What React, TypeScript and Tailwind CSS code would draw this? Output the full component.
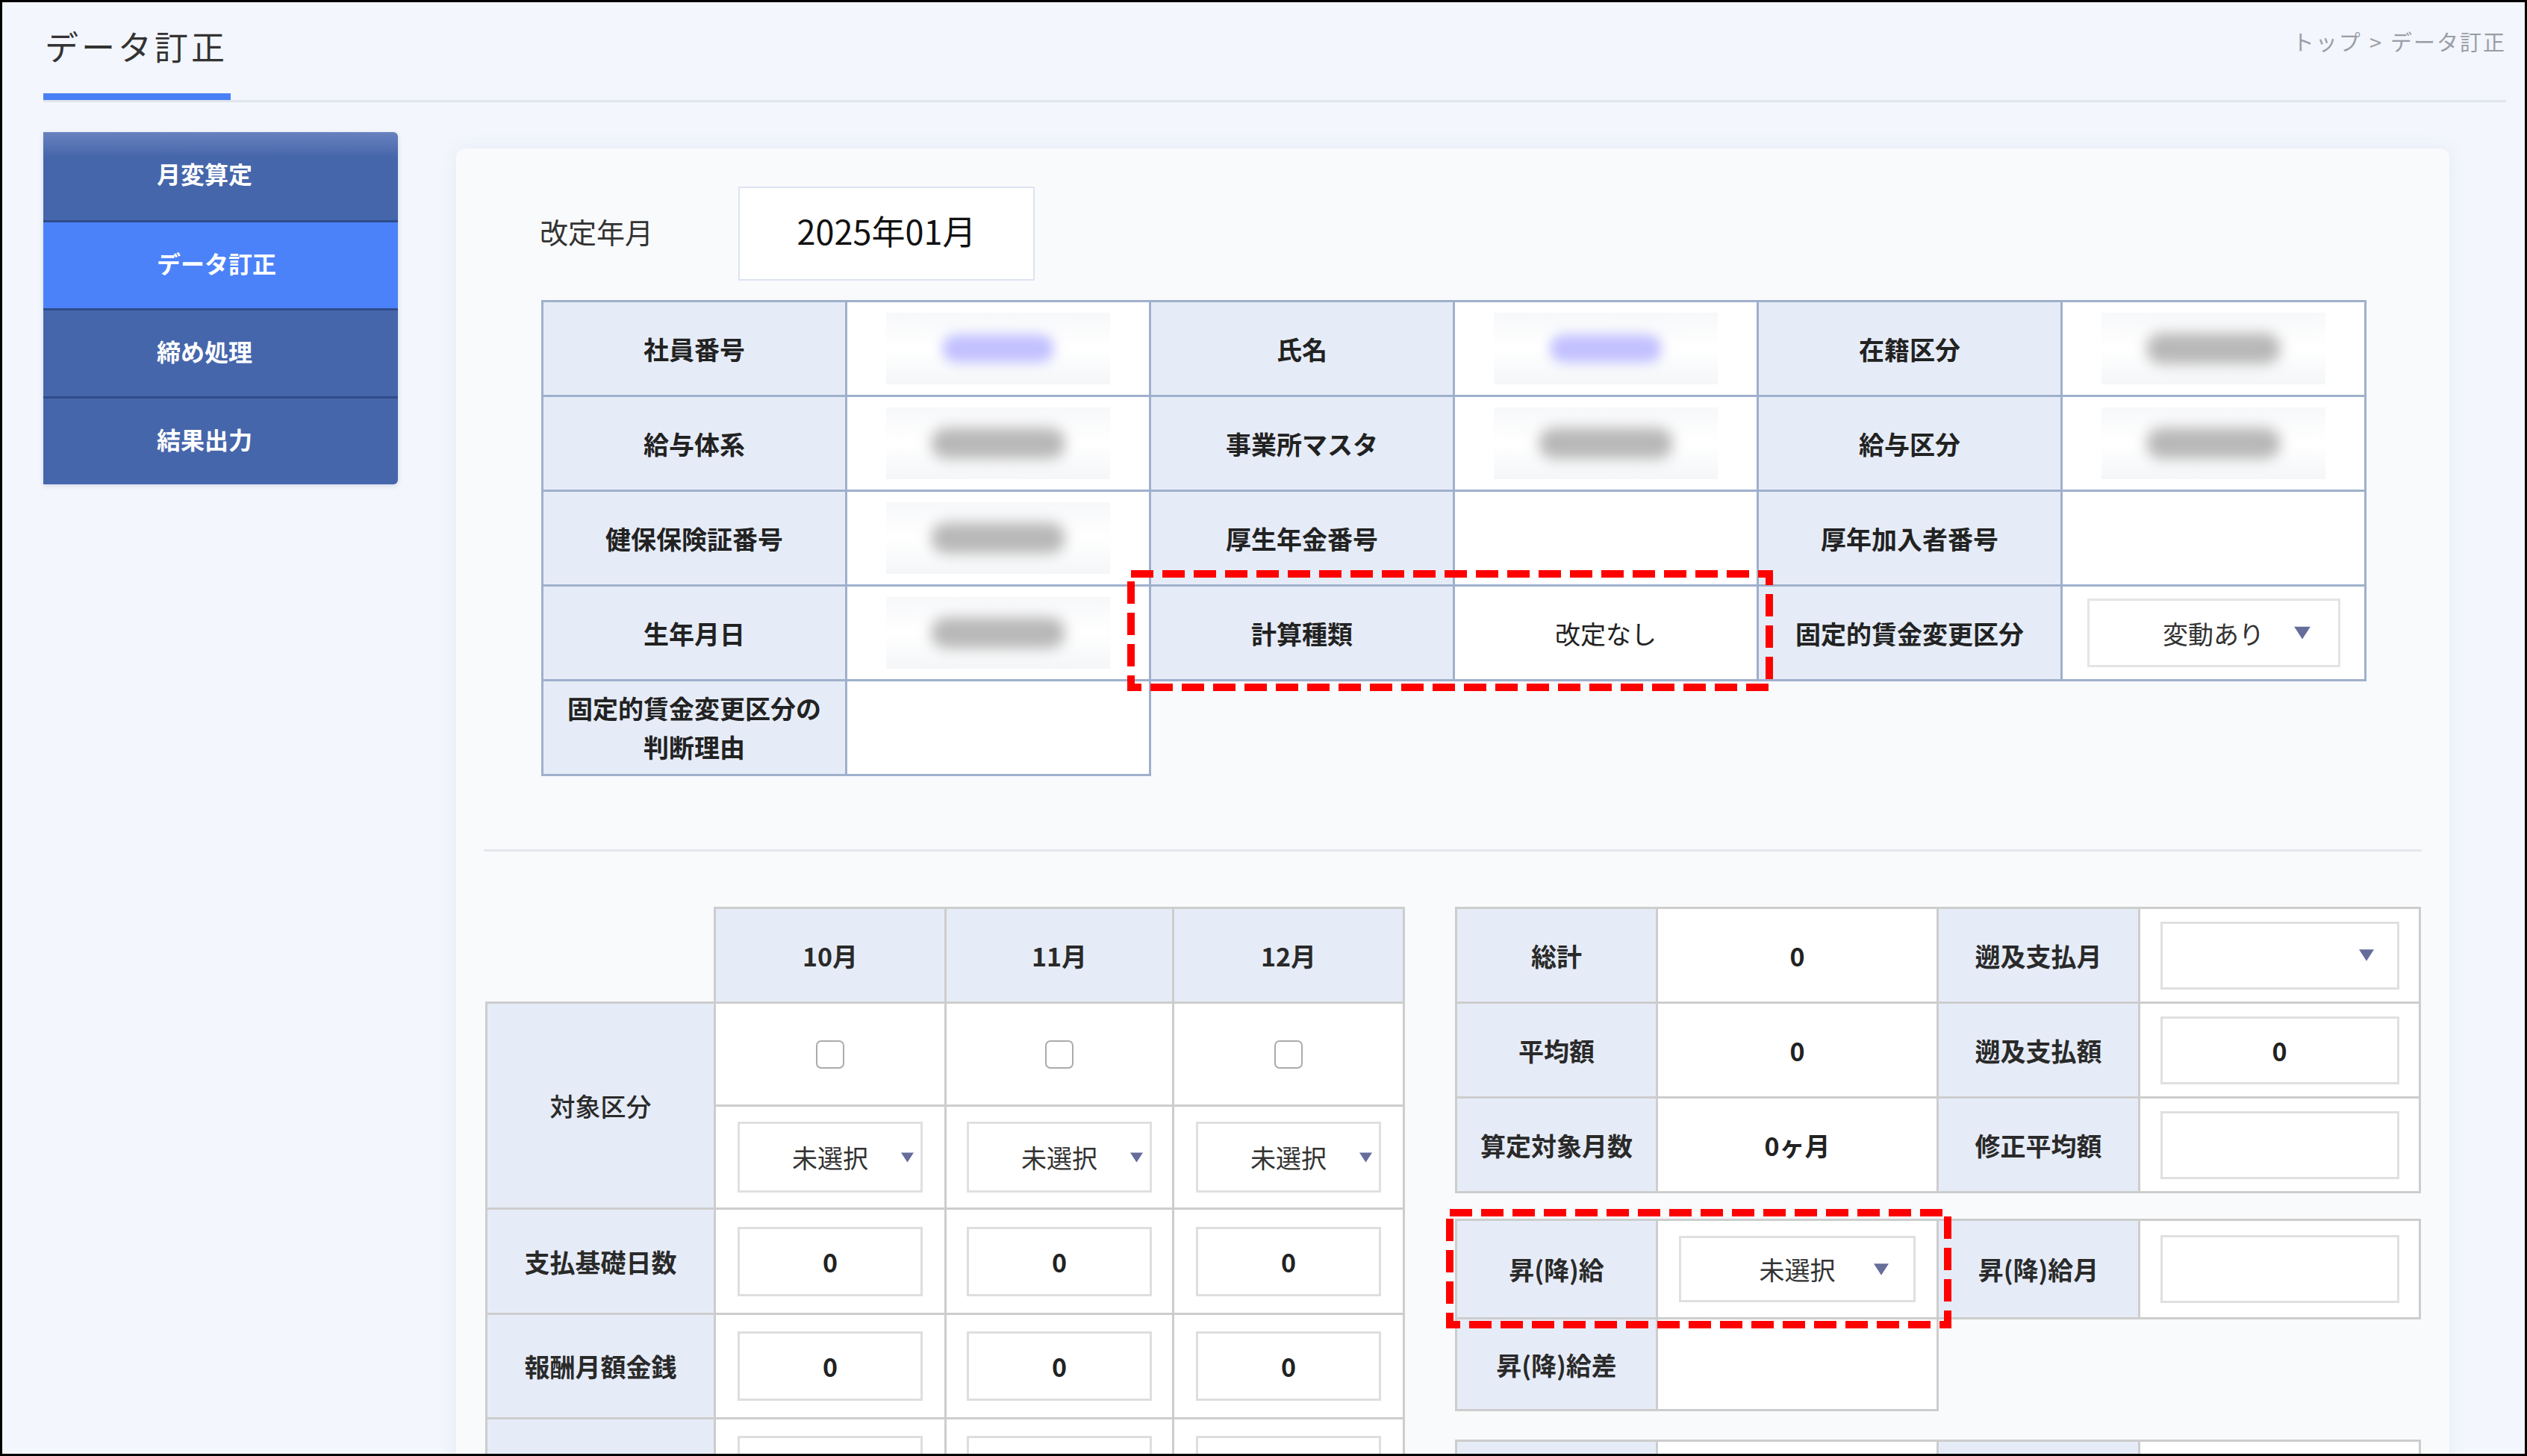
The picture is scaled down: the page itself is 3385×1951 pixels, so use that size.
import React from "react";

function Arrow({ pos }: { pos: string }) {
  return (
    <svg viewBox="0 0 22 17" className={pos}>
      <path d="M0 0H22L11 17Z" fill="#666d9b" />
    </svg>
  );
}

function Redacted({ tone }: { tone: "purple" | "gray" }) {
  return (
    <div className="mx-auto flex h-[96px] w-[300px] items-center justify-center bg-gradient-to-b from-[#f7f8fa] via-white to-[#f4f6f8]">
      {tone === "purple" ? (
        <div className="h-[38px] w-[150px] rounded-full bg-[#c2c1ff] blur-[8px]" />
      ) : (
        <div className="h-[42px] w-[180px] rounded-full bg-[#b8b8b8] blur-[9px]" />
      )}
    </div>
  );
}

const TL = "border-[3px] border-[#9fb0cc] bg-[#e6ecf7] text-center align-middle text-[34px] font-bold text-[#222]";
const TV = "border-[3px] border-[#9fb0cc] bg-white text-center align-middle text-[34px] text-[#222]";
const BL = "border-[3px] border-[#cdcdcd] bg-[#e6ecf7] text-center align-middle text-[34px] font-bold text-[#2a2a2a]";
const BV = "border-[3px] border-[#cdcdcd] bg-white text-center align-middle text-[34px] text-[#222]";

function SmallSelect() {
  return (
    <div className="relative mx-auto flex h-[95px] w-[248px] items-center justify-center border-[3px] border-[#e0e0e0] bg-white text-[34px] text-[#333]">
      未選択
      <Arrow pos="absolute right-[9px] top-1/2 h-[17px] w-[17px] -translate-y-1/2" />
    </div>
  );
}

function SmallInput({ v }: { v: string }) {
  return (
    <div className="mx-auto flex h-[93px] w-[248px] items-center justify-center border-[3px] border-[#dedede] bg-white text-[34px] font-bold text-[#222]">
      {v}
    </div>
  );
}

function WideInput({ v }: { v?: string }) {
  return (
    <div className="mx-auto flex h-[91px] w-[320px] items-center justify-center border-[3px] border-[#e0e0e0] bg-white text-[34px] font-bold text-[#222]">
      {v}
    </div>
  );
}

export default function App() {
  return (
    <div className="relative h-[1951px] w-[3385px] overflow-hidden border-[3px] border-black bg-[#f3f6fc] font-['Noto_Sans_CJK_JP','Noto_Sans',sans-serif]">
      {/* header */}
      <div className="ml-[55px] mr-[25px] flex h-[134px] justify-between border-b-[3px] border-[#e0e5ee]">
        <div className="h-[131px] w-[251px] border-b-[9px] border-[#4a80f5] pl-[2px] pt-[29px]">
          <div className="text-[45px] leading-[60px] tracking-[4px] text-[#333]">データ訂正</div>
        </div>
        <div className="pt-[32px] text-[29px] leading-[40px] tracking-[2px] text-[#9b9da6]">トップ<span className="px-[10px]">&gt;</span>データ訂正</div>
      </div>

      <div className="ml-[55px] flex items-start">
        {/* sidebar */}
        <div className="mt-[40px] w-[475px] overflow-hidden rounded-r-[6px] shadow-[0_2px_6px_rgba(40,60,110,0.15)]">
          <div className="flex h-[118px] items-center bg-[linear-gradient(#6882be,#4666ab_34px)] pb-[8px] pl-[152px] text-[32px] font-bold text-white">月変算定</div>
          <div className="flex h-[118px] items-center border-t-[3px] border-[#2f4b8a] bg-[#4b82f9] pb-[8px] pl-[152px] text-[32px] font-bold text-white">データ訂正</div>
          <div className="flex h-[118px] items-center border-t-[3px] border-[#2f4b8a] bg-[#4666ab] pb-[8px] pl-[152px] text-[32px] font-bold text-white">締め処理</div>
          <div className="flex h-[118px] items-center border-t-[3px] border-[#2f4b8a] bg-[#4666ab] pb-[8px] pl-[152px] text-[32px] font-bold text-white">結果出力</div>
        </div>

        {/* card */}
        <div className="ml-[78px] mt-[62px] h-[1800px] w-[2670px] rounded-[12px] bg-[#f9fafc] pt-[51px] shadow-[0_0_24px_rgba(60,90,160,0.07)]">
          <div className="flex h-[126px] items-center pl-[112px]">
            <div className="w-[266px] pb-[8px] text-[38px] text-[#333]">改定年月</div>
            <div className="flex h-[126px] w-[397px] items-center justify-center border-[2px] border-[#dde3f2] bg-white pb-[8px] text-[45px] text-[#111]">2025年01月</div>
          </div>

          <table className="ml-[114px] mt-[26px] w-[2442px] table-fixed border-collapse">
            <colgroup>
              <col className="w-[407px]" />
              <col className="w-[407px]" />
              <col className="w-[407px]" />
              <col className="w-[407px]" />
              <col className="w-[407px]" />
              <col className="w-[407px]" />
            </colgroup>
            <tbody>
              <tr className="h-[127px]">
                <td className={TL}>社員番号</td>
                <td className={TV}><Redacted tone="purple" /></td>
                <td className={TL}>氏名</td>
                <td className={TV}><Redacted tone="purple" /></td>
                <td className={TL}>在籍区分</td>
                <td className={TV}><Redacted tone="gray" /></td>
              </tr>
              <tr className="h-[127px]">
                <td className={TL}>給与体系</td>
                <td className={TV}><Redacted tone="gray" /></td>
                <td className={TL}>事業所マスタ</td>
                <td className={TV}><Redacted tone="gray" /></td>
                <td className={TL}>給与区分</td>
                <td className={TV}><Redacted tone="gray" /></td>
              </tr>
              <tr className="h-[127px]">
                <td className={TL}>健保保険証番号</td>
                <td className={TV}><Redacted tone="gray" /></td>
                <td className={TL}>厚生年金番号</td>
                <td className={TV}></td>
                <td className={TL}>厚年加入者番号</td>
                <td className={TV}></td>
              </tr>
              <tr className="h-[127px]">
                <td className={TL}>生年月日</td>
                <td className={TV}><Redacted tone="gray" /></td>
                <td className={TL}>計算種類</td>
                <td className={TV}>改定なし</td>
                <td className={TL}>固定的賃金変更区分</td>
                <td className={TV}>
                  <div className="relative mx-auto flex h-[92px] w-[339px] items-center justify-center border-[3px] border-[#e4e4e4] bg-white text-[34px] text-[#333]">
                    変動あり
                    <Arrow pos="absolute right-[37px] top-1/2 h-[17px] w-[22px] -translate-y-1/2" />
                  </div>
                </td>
              </tr>
              <tr className="h-[127px]">
                <td className={TL + " leading-[52px]"}>固定的賃金変更区分の<br />判断理由</td>
                <td className={TV}></td>
                <td className="border-0"></td>
                <td className="border-0"></td>
                <td className="border-0"></td>
                <td className="border-0"></td>
              </tr>
            </tbody>
          </table>

          <div className="mx-[37px] mt-[98px] h-[3px] bg-[#e4e7ec]" />

          <div className="mt-[74px] flex items-start pl-[39px]">
            {/* left table */}
            <table className="w-[1229px] table-fixed border-collapse">
              <colgroup>
                <col className="w-[306px]" />
                <col className="w-[309px]" />
                <col className="w-[305px]" />
                <col className="w-[309px]" />
              </colgroup>
              <tbody>
                <tr className="h-[127px]">
                  <td className="border-0"></td>
                  <td className={BL}>10月</td>
                  <td className={BL}>11月</td>
                  <td className={BL}>12月</td>
                </tr>
                <tr className="h-[138px]">
                  <td className={BL + " font-medium"} rowSpan={2}>対象区分</td>
                  <td className={BV}><div className="mx-auto h-[38px] w-[38px] rounded-[7px] border-[2px] border-[#ababab] bg-white" /></td>
                  <td className={BV}><div className="mx-auto h-[38px] w-[38px] rounded-[7px] border-[2px] border-[#ababab] bg-white" /></td>
                  <td className={BV}><div className="mx-auto h-[38px] w-[38px] rounded-[7px] border-[2px] border-[#ababab] bg-white" /></td>
                </tr>
                <tr className="h-[138px]">
                  <td className={BV}><SmallSelect /></td>
                  <td className={BV}><SmallSelect /></td>
                  <td className={BV}><SmallSelect /></td>
                </tr>
                <tr className="h-[141px]">
                  <td className={BL}>支払基礎日数</td>
                  <td className={BV}><SmallInput v="0" /></td>
                  <td className={BV}><SmallInput v="0" /></td>
                  <td className={BV}><SmallInput v="0" /></td>
                </tr>
                <tr className="h-[140px]">
                  <td className={BL}>報酬月額金銭</td>
                  <td className={BV}><SmallInput v="0" /></td>
                  <td className={BV}><SmallInput v="0" /></td>
                  <td className={BV}><SmallInput v="0" /></td>
                </tr>
                <tr className="h-[140px]">
                  <td className={BL}></td>
                  <td className={BV}><SmallInput v="" /></td>
                  <td className={BV}><SmallInput v="" /></td>
                  <td className={BV}><SmallInput v="" /></td>
                </tr>
              </tbody>
            </table>

            {/* right tables */}
            <div className="ml-[67px] flex w-[1291px] flex-col">
              <table className="w-[1291px] table-fixed border-collapse">
                <colgroup>
                  <col className="w-[269px]" />
                  <col className="w-[376px]" />
                  <col className="w-[270px]" />
                  <col className="w-[376px]" />
                </colgroup>
                <tbody>
                  <tr className="h-[127px]">
                    <td className={BL}>総計</td>
                    <td className={BV + " font-bold"}>0</td>
                    <td className={BL}>遡及支払月</td>
                    <td className={BV}>
                      <div className="relative mx-auto h-[91px] w-[320px] border-[3px] border-[#e0e0e0] bg-white">
                        <Arrow pos="absolute right-[31px] top-1/2 h-[17px] w-[20px] -translate-y-1/2" />
                      </div>
                    </td>
                  </tr>
                  <tr className="h-[127px]">
                    <td className={BL}>平均額</td>
                    <td className={BV + " font-bold"}>0</td>
                    <td className={BL}>遡及支払額</td>
                    <td className={BV}><WideInput v="0" /></td>
                  </tr>
                  <tr className="h-[127px]">
                    <td className={BL}>算定対象月数</td>
                    <td className={BV + " font-bold"}>0ヶ月</td>
                    <td className={BL}>修正平均額</td>
                    <td className={BV}><WideInput /></td>
                  </tr>
                </tbody>
              </table>

              <table className="mt-[34px] w-[1291px] table-fixed border-collapse">
                <colgroup>
                  <col className="w-[269px]" />
                  <col className="w-[376px]" />
                  <col className="w-[270px]" />
                  <col className="w-[376px]" />
                </colgroup>
                <tbody>
                  <tr className="h-[132px]">
                    <td className={BL}>昇(降)給</td>
                    <td className={BV}>
                      <div className="relative mx-auto flex h-[89px] w-[317px] items-center justify-center border-[3px] border-[#e0e0e0] bg-white text-[34px] text-[#333]">
                        未選択
                        <Arrow pos="absolute right-[33px] top-1/2 h-[17px] w-[20px] -translate-y-1/2" />
                      </div>
                    </td>
                    <td className={BL}>昇(降)給月</td>
                    <td className={BV}><WideInput /></td>
                  </tr>
                  <tr className="h-[123px]">
                    <td className={BL}>昇(降)給差</td>
                    <td className={BV}></td>
                    <td className="border-0"></td>
                    <td className="border-0"></td>
                  </tr>
                </tbody>
              </table>

              <table className="mt-[38px] w-[1291px] table-fixed border-collapse">
                <colgroup>
                  <col className="w-[269px]" />
                  <col className="w-[376px]" />
                  <col className="w-[270px]" />
                  <col className="w-[376px]" />
                </colgroup>
                <tbody>
                  <tr className="h-[127px]">
                    <td className={BL}></td>
                    <td className={BV}><WideInput /></td>
                    <td className={BL}></td>
                    <td className={BV}><WideInput /></td>
                  </tr>
                </tbody>
              </table>
            </div>
          </div>
        </div>
      </div>

      {/* annotation boxes */}
      <svg className="absolute left-[1507px] top-[761px] h-[162px] w-[865px]" viewBox="0 0 865 162">
        <rect x="5" y="5" width="855" height="152" fill="none" stroke="#ff0000" strokeWidth="10" strokeDasharray="30 12" />
      </svg>
      <svg className="absolute left-[1934px] top-[1617px] h-[160px] w-[677px]" viewBox="0 0 677 160">
        <rect x="5" y="5" width="667" height="150" fill="none" stroke="#ff0000" strokeWidth="10" strokeDasharray="30 12" />
      </svg>
    </div>
  );
}
